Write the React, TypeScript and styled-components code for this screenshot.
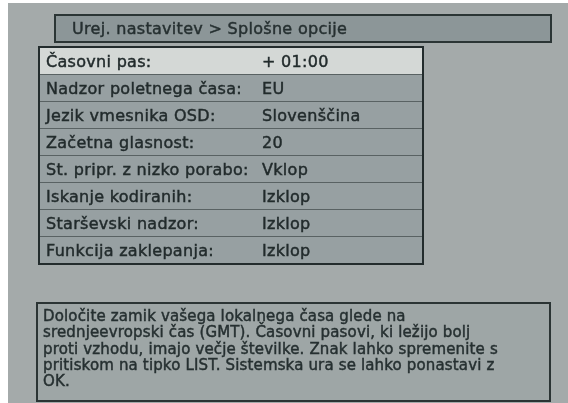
import React from "react";
import styled, { createGlobalStyle } from "styled-components";

const Global = createGlobalStyle`
  html, body { margin: 0; padding: 0; background: #ffffff; }
  body { font-family: "DejaVu Sans", Verdana, sans-serif; }
`;

const Screen = styled.div`
  margin: 3px 0 0 8px;
  height: 400px;
  background: #a4aaaa;
  display: flex;
  flex-direction: column;
  align-items: flex-start;
  padding-top: 11px;
  box-sizing: border-box;
  overflow: hidden;
  color: #263031;
  font-family: "DejaVu Sans", Verdana, sans-serif;
  -webkit-text-stroke: 0.45px currentColor;
  filter: blur(0.4px);
`;

const TitleBar = styled.div`
  margin-left: 46px;
  width: 498px;
  height: 29px;
  box-sizing: border-box;
  border: 2px solid #2b3535;
  background: #8c9698;
  display: flex;
  align-items: center;
  padding-left: 16px;
  font-size: 16px;
  letter-spacing: 0.3px;
  color: #263031;
`;

const Table = styled.div`
  margin-top: 3px;
  margin-left: 30px;
  width: 386px;
  box-sizing: border-box;
  border: 2px solid #232c2d;
  background: #596263;
  display: flex;
  flex-direction: column;
  gap: 1px;
`;

const Row = styled.div<{ $active?: boolean }>`
  display: grid;
  grid-template-columns: 216px 1fr;
  height: 26px;
  align-items: center;
  background: ${(p) => (p.$active ? "#d4d8d6" : "#97a0a2")};
  font-size: 16px;
  letter-spacing: 0.3px;
  color: #222b2c;
  white-space: nowrap;
`;

const Label = styled.span`
  padding-left: 6px;
`;

const Value = styled.span`
  padding-left: 6px;
`;

const Desc = styled.div`
  margin-top: 37px;
  margin-left: 28px;
  width: 515px;
  height: 100px;
  box-sizing: border-box;
  border: 2px solid #2b3434;
  background: #9ea6a6;
  padding: 4px 5px 0 5px;
  font-size: 15px;
  line-height: 16.3px;
  letter-spacing: 0.15px;
  color: #263031;
  white-space: nowrap;
`;

const rows: [string, string][] = [
  ["Časovni pas:", "+ 01:00"],
  ["Nadzor poletnega časa:", "EU"],
  ["Jezik vmesnika OSD:", "Slovenščina"],
  ["Začetna glasnost:", "20"],
  ["St. pripr. z nizko porabo:", "Vklop"],
  ["Iskanje kodiranih:", "Izklop"],
  ["Starševski nadzor:", "Izklop"],
  ["Funkcija zaklepanja:", "Izklop"],
];

const descLines = [
  "Določite zamik vašega lokalnega časa glede na",
  "srednjeevropski čas (GMT). Časovni pasovi, ki ležijo bolj",
  "proti vzhodu, imajo večje številke. Znak lahko spremenite s",
  "pritiskom na tipko LIST. Sistemska ura se lahko ponastavi z",
  "OK.",
];

export default function App() {
  return (
    <>
      <Global />
      <Screen>
        <TitleBar>Urej. nastavitev &gt; Splošne opcije</TitleBar>
        <Table>
          {rows.map(([l, v], i) => (
            <Row key={l} $active={i === 0}>
              <Label>{l}</Label>
              <Value>{v}</Value>
            </Row>
          ))}
        </Table>
        <Desc>
          {descLines.map((t, i) => (
            <React.Fragment key={i}>
              {t}
              {i < descLines.length - 1 && <br />}
            </React.Fragment>
          ))}
        </Desc>
      </Screen>
    </>
  );
}
